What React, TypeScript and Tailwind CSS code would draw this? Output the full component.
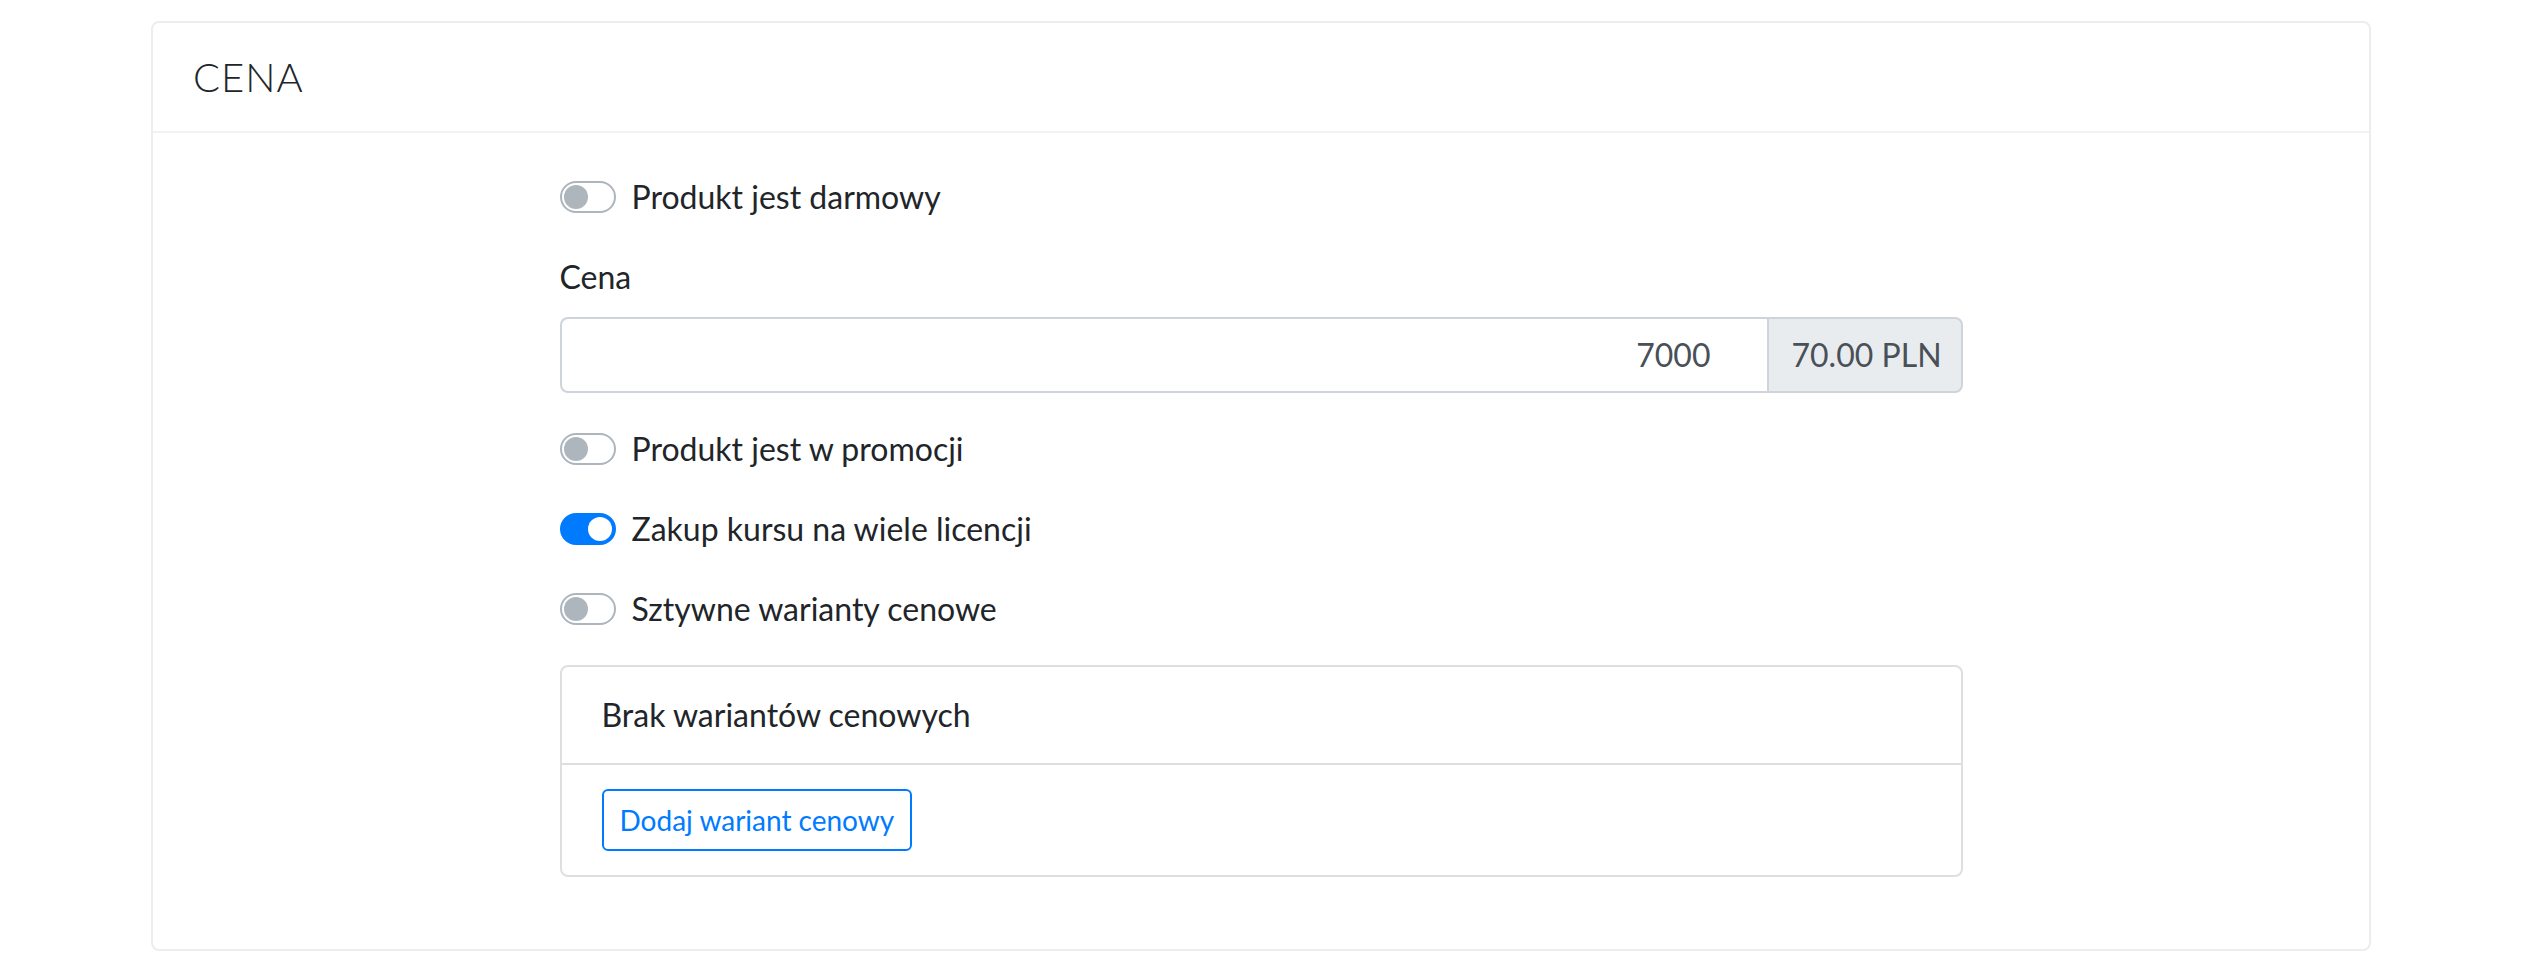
import React, { useState } from 'react';

const Toggle: React.FC<{ checked: boolean; onChange: () => void; label: string }> = ({ checked, onChange, label }) => (
  <label className="flex items-center h-[48px] cursor-pointer select-none" onClick={onChange}>
    <span
      className={`relative w-[56px] h-[32px] rounded-full border-2 shrink-0 ${
        checked ? 'bg-[#007bff] border-[#007bff]' : 'bg-white border-[#adb5bd]'
      }`}
    >
      <span
        className={`absolute top-[2px] w-[24px] h-[24px] rounded-full ${
          checked ? 'left-[26px] bg-white' : 'left-[2px] bg-[#adb5bd]'
        }`}
      ></span>
    </span>
    <span className="ml-4 text-[#212529]">{label}</span>
  </label>
);

export default function App() {
  const [free, setFree] = useState(false);
  const [promo, setPromo] = useState(false);
  const [licenses, setLicenses] = useState(true);
  const [fixed, setFixed] = useState(false);
  const [price, setPrice] = useState('7000');

  const formatted = (Number(price || 0) / 100).toFixed(2) + ' PLN';

  return (
    <div className="bg-white pt-[21px] font-['Lato','Noto_Sans',sans-serif] text-[32px] leading-[48px] text-[#212529]">
      <div className="ml-[151px] w-[2220px] border-2 border-[#ededed] rounded-lg">
        {/* Card header */}
        <div className="h-[110px] flex items-center px-10 border-b-2 border-[#f2f2f2]">
          <h5 className="text-[40px] font-light tracking-wide text-[#212529]">CENA</h5>
        </div>

        <div className="px-10 pt-10 pb-10">
          <div className="w-[1403px] mx-auto">
            <Toggle checked={free} onChange={() => setFree(!free)} label="Produkt jest darmowy" />

            <div className="mt-8 mb-8">
              <label className="block mb-4">Cena</label>
              <div className="flex h-[76px]">
                <input
                  value={price}
                  onChange={(e) => setPrice(e.target.value)}
                  className="flex-1 min-w-0 border-2 border-r-0 border-[#ced4da] rounded-l-lg text-right pr-[56px] pl-6 text-[#495057] outline-none"
                />
                <div className="w-[196px] flex items-center pl-[23px] bg-[#e9ecef] border-2 border-[#ced4da] rounded-r-lg text-[#495057] whitespace-nowrap">
                  {formatted}
                </div>
              </div>
            </div>

            <div className="flex flex-col gap-8">
              <Toggle checked={promo} onChange={() => setPromo(!promo)} label="Produkt jest w promocji" />
              <Toggle checked={licenses} onChange={() => setLicenses(!licenses)} label="Zakup kursu na wiele licencji" />
              <Toggle checked={fixed} onChange={() => setFixed(!fixed)} label="Sztywne warianty cenowe" />
            </div>

            <div className="mt-8 mb-8 border-2 border-[#dfdfdf] rounded-lg">
              <div className="px-10 py-6 border-b-2 border-[#dfdfdf]">Brak wariantów cenowych</div>
              <div className="px-10 py-6">
                <button className="border-2 border-[#007bff] text-[#007bff] text-[28px] leading-[42px] px-4 py-2 rounded-md bg-white">
                  Dodaj wariant cenowy
                </button>
              </div>
            </div>
          </div>
        </div>
      </div>
    </div>
  );
}
